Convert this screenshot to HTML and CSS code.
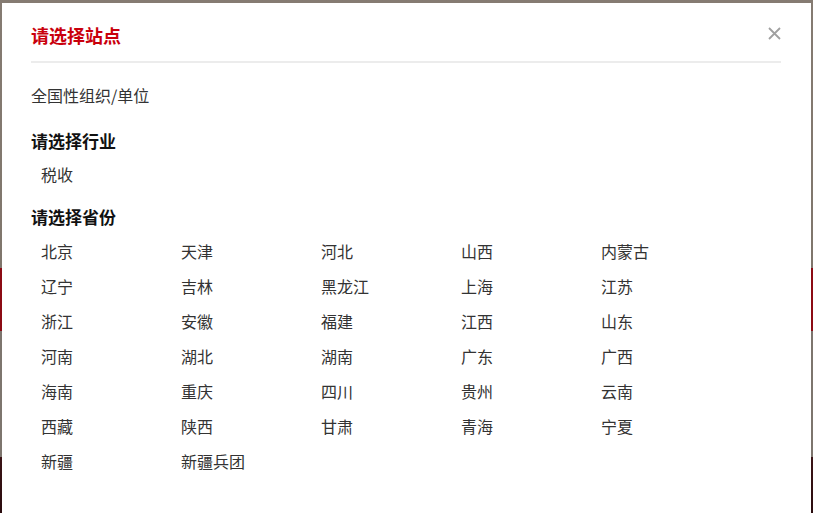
FILE: index.html
```html
<!DOCTYPE html>
<html lang="zh-CN">
<head>
    <meta charset="UTF-8">
    <meta name="viewport" content="width=device-width, initial-scale=1.0">
    <title>请选择站点</title>
    <link rel="stylesheet" href="styles.css">
</head>
<body>

    <div class="modal">
        <div class="modal-header">
            <h3 class="modal-title">请选择站点</h3>
            <button class="modal-close" aria-label="关闭">
                <svg width="13" height="13" viewBox="0 0 13 13">
                    <path d="M1 1 L12 12 M12 1 L1 12" stroke="#a0a0a0" stroke-width="1.8" fill="none"/>
                </svg>
            </button>
        </div>

        <div class="modal-body">
            <p class="national">全国性组织/单位</p>

            <h4 class="section-title">请选择行业</h4>
            <div class="option-list">
                <a class="option">税收</a>
            </div>

            <h4 class="section-title">请选择省份</h4>
            <div class="option-grid" id="provinceGrid"></div>
        </div>
    </div>

    <script>
        const provinces = [
            "北京", "天津", "河北", "山西", "内蒙古",
            "辽宁", "吉林", "黑龙江", "上海", "江苏",
            "浙江", "安徽", "福建", "江西", "山东",
            "河南", "湖北", "湖南", "广东", "广西",
            "海南", "重庆", "四川", "贵州", "云南",
            "西藏", "陕西", "甘肃", "青海", "宁夏",
            "新疆", "新疆兵团"
        ];

        const grid = document.getElementById("provinceGrid");

        provinces.forEach((name) => {
            const a = document.createElement("a");
            a.className = "option";
            a.textContent = name;
            grid.appendChild(a);
        });
    </script>
</body>
</html>
```

FILE: styles.css
```css
/* Reset */
* {
    margin: 0;
    padding: 0;
    box-sizing: border-box;
    font-family: "Microsoft YaHei", "Noto Sans CJK SC", sans-serif;
}

/* Halaman belakang (redup) */
body {
    height: 513px;
    overflow: hidden;
    background: linear-gradient(
        to bottom,
        #857b72 0px,
        #7f766c 268px,
        #8c0b14 268px,
        #8c0b14 331px,
        #7d756e 331px,
        #7d756e 457px,
        #3b1416 457px,
        #2a0c0e 513px
    );
}

/* Kotak modal */
.modal {
    margin: 3px 2px 0 2px;
    min-height: 530px;
    background: #fff;
    padding: 0 30px 0 29px;
}

.modal-header {
    height: 60px;
    padding-top: 6px;
    display: flex;
    align-items: center;
    justify-content: space-between;
    border-bottom: 2px solid #ececec;
}

.modal-title {
    font-size: 18px;
    font-weight: bold;
    color: #c9000c;
    line-height: 24px;
}

.modal-close {
    background: none;
    border: none;
    cursor: pointer;
    width: 13px;
    height: 13px;
    margin-bottom: 3px;
    display: flex;
}

/* Isi */
.modal-body {
    color: #333;
    font-size: 16px;
}

.national {
    margin-top: 22px;
    line-height: 20px;
}

.section-title {
    margin-top: 24px;
    font-size: 17px;
    font-weight: bold;
    color: #111;
    line-height: 24px;
}

.section-title + .option-grid {
    margin-top: 5px;
}

.option-list {
    margin-top: 11px;
    padding-left: 10px;
    line-height: 20px;
    margin-bottom: -3px;
}

.option {
    cursor: pointer;
    color: #333;
}

.option:hover {
    color: #c9000c;
}

.option-grid {
    display: grid;
    grid-template-columns: repeat(5, 140px);
    grid-auto-rows: 35px;
    padding-left: 10px;
    line-height: 35px;
}
```
